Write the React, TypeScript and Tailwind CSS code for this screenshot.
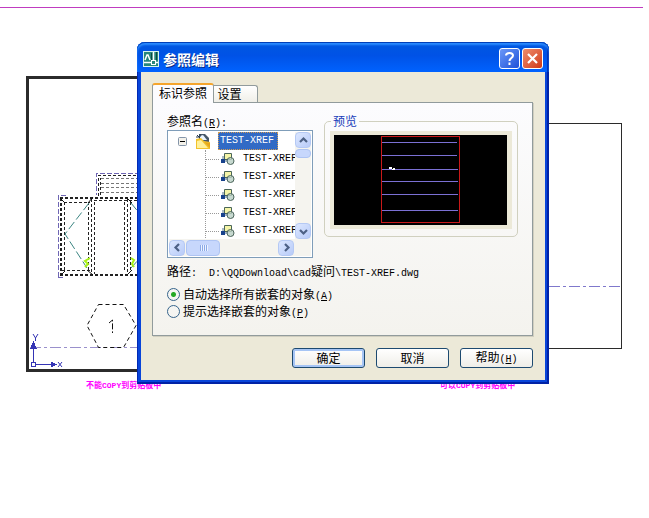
import { useState } from "react";
import type { ReactNode } from "react";

const CAPTION = '"Liberation Mono", "Noto Sans CJK SC", monospace';

function Latin({ children }: { children: ReactNode }) {
  return <span className="font-['Liberation_Mono','Noto_Sans_CJK_SC',monospace] text-[10px]">{children}</span>;
}

function Drawing() {
  return (
    <svg className="absolute left-0 top-0" width="649" height="518" viewBox="0 0 649 518" fill="none" shapeRendering="crispEdges" aria-hidden="true">
      <rect y="7" width="643" height="1" fill="#c03cc0" />
      <path d="M140 77.500H27.500V370.500H140" stroke="#2b2b2b" strokeWidth="3" />
      <path d="M540 123.500H621.500V348.500H540" stroke="#2b2b2b" />
      <path d="M30 347.500H140" stroke="#9a90cc" strokeDasharray="11 3 3 3" />
      <path d="M549 286.500H621" stroke="#7f78cc" strokeDasharray="11 3 3 3" />
      <g stroke="#6f66b4" strokeDasharray="5 2">
        <path d="M140 173.500H96.500V195M58.500 277V195.500H68M58 277.500H65" />
      </g>
      <g stroke="#222" strokeDasharray="3 2">
        <path d="M98.500 196V175.500H140M100.500 195V178" />
        <path d="M101 178.500H140M101 183.500H140M101 187.500H140M101 192.500H140" stroke="#777" />
        <path d="M60 197.500H140M60 275H140" strokeWidth="2" />
        <path d="M64 202.500H90M94 200.500H140M62 270.500H90" />
        <path d="M61 198V276" strokeWidth="2" />
        <path d="M64.500 202V271M88.500 202V271M91.500 199V274M94.500 202V274M124.500 202V272M127.500 199V274M130.500 202V271" />
      </g>
      <g stroke="#111" shapeRendering="auto">
        <path d="M60 198L65 203M93 197L88 203M60 276L65 271M87 270L93 275M126 197L132 203M127 275L132 270" />
        <path d="M98.500 304.500H123.500L136 325.500L123.500 347.500H98.500L87 325.500Z" strokeDasharray="4 3" />
        <path d="M109 323L112.500 320V333" strokeDasharray="6 2" />
      </g>
      <g stroke="#3b8582" strokeDasharray="9 3" shapeRendering="auto">
        <path d="M89 203L65 234L87 268M131 203L140 214M131 268L140 258" />
      </g>
      <g stroke="#a9f216" strokeWidth="2" shapeRendering="auto">
        <path d="M90 258L85 261L88 264L85 267M131 258L134 260L132 264L134 267" />
      </g>
      <g stroke="#3434b5">
        <path d="M33.500 362V348M36 364.500H53" />
        <path d="M31.500 362.500H35.500V366.500H31.500Z" />
        <path d="M33.500 342L31 348H36ZM56 364.500L51 362V367Z" fill="#3434b5" />
        <path d="M33 334L35.500 338L38 334M35.500 338V341M58 362L62 367M62 362L58 367" shapeRendering="auto" />
      </g>
      <g fill="#ff00ff" fontSize="8" fontWeight="700" fontFamily={CAPTION}>
        <text x="86" y="388">不能COPY到剪贴板中</text>
        <text x="440" y="388">可以COPY到剪贴板中</text>
      </g>
    </svg>
  );
}

function AppIcon() {
  return (
    <svg width="16" height="16" viewBox="0 0 16 16" fill="none" aria-hidden="true">
      <rect x=".5" y=".5" width="15" height="15" fill="#27877b" stroke="#d7f4ec" />
      <path d="M2 9L4 4H5L7 9M10.500 1V9M1 11.500H8M12.500 11.500H15" stroke="#fff" strokeWidth="1.500" />
      <path d="M8.500 2V9M13.500 1V9" stroke="#0c473f" />
      <rect x="8.500" y="9.500" width="4" height="4" fill="#27877b" stroke="#fff" />
    </svg>
  );
}

function FileIcon() {
  return (
    <svg width="17" height="17" viewBox="0 0 17 17" aria-hidden="true">
      <path d="M4 1H10L14 5V12H4Z" fill="#46586a" />
      <path d="M5 3L8 2L12 7H5Z" fill="#e9f4ff" />
      <path d="M1 6L6 5L9 8L15 9V16H1Z" fill="#f2c22c" />
      <path d="M2 8L6 7L13 15H2Z" fill="#fff09a" />
      <path d="M9 9L15 10V15Z" fill="#e5a81b" />
      <path d="M2 2L5 5M5 1V4M1 4H4" stroke="#26394c" />
    </svg>
  );
}

function BlockIcon() {
  return (
    <svg className="shrink-0" width="15" height="14" viewBox="0 0 15 14" fill="none" aria-hidden="true">
      <path d="M3.500 1.500H10.500V7.500H3.500Z" fill="#f5f5a8" stroke="#4b6658" />
      <circle cx="9.500" cy="9" r="3.500" fill="#b9cfc4" fillOpacity=".8" stroke="#4c655b" />
      <path d="M2 4V9H7" stroke="#54748b" />
      <rect x="0" y="7" width="4" height="4" fill="#17418b" />
    </svg>
  );
}

function Arrow({ dir }: { dir: "up" | "down" | "left" | "right" }) {
  const d = {
    up: "M1 6L4.500 2.500L8 6",
    down: "M1 3L4.500 6.500L8 3",
    left: "M6 1L2.500 4.500L6 8",
    right: "M3 1L6.500 4.500L3 8",
  }[dir];
  return (
    <button type="button" aria-label={`Scroll ${dir}`} className="flex size-4 shrink-0 items-center justify-center rounded-sm border border-[#b5c9f4] bg-linear-to-br from-[#dce7ff] to-[#b8cbf8]">
      <svg width="9" height="9" viewBox="0 0 9 9" fill="none"><path d={d} stroke="#4d6185" strokeWidth="2.200" /></svg>
    </button>
  );
}

function Tree() {
  return (
    <div className="flex h-32 flex-col border border-[#7f9db9] bg-white p-px">
      <div className="flex min-h-0 flex-1">
        <ul role="tree" className="min-w-0 flex-1 overflow-hidden whitespace-nowrap">
          <li role="treeitem" aria-expanded="true">
            <div className="flex h-[18px] items-center pl-[9px]">
              <svg width="9" height="9" viewBox="0 0 9 9" className="shrink-0" aria-hidden="true">
                <rect x=".5" y=".5" width="8" height="8" rx="1" fill="#f4f2eb" stroke="#8495a9" />
                <path d="M2 4.500H7" stroke="#000" />
              </svg>
              <span className="ml-2 shrink-0"><FileIcon /></span>
              <span className="ml-[6px] flex h-[18px] items-center border border-dotted border-[#d39b51] bg-[#316ac5] px-px pr-[3px] leading-4 text-white"><Latin>TEST-XREF</Latin></span>
            </div>
            <ul role="group" className="ml-9 border-l border-dotted border-[#999]">
              {[1, 2, 3, 4, 5].map((n) => (
                <li key={n} role="treeitem" className="flex h-[18px] items-center">
                  <span className="mr-[2px] w-[13px] shrink-0 border-t border-dotted border-[#999]" />
                  <BlockIcon />
                  <span className="ml-[7px] flex"><Latin>TEST-XREF</Latin></span>
                </li>
              ))}
            </ul>
          </li>
        </ul>
        <div className="flex w-4 flex-col bg-[#f5f4ef]">
          <Arrow dir="up" />
          <div className="mt-px h-[9px] rounded-sm border border-[#aec4f3] bg-[#c7d7fc]" />
          <div className="flex-1" />
          <Arrow dir="down" />
        </div>
      </div>
      <div className="flex h-[17px] items-center bg-[#f5f4ef] pr-[17px]">
        <Arrow dir="left" />
        <div className="ml-px flex h-4 w-[34px] items-center justify-center gap-px rounded-sm border border-[#aec4f3] bg-[#c7d7fc]">
          {[1, 2, 3, 4].map((n) => <span key={n} className="h-[6px] w-px bg-[#8caae6] shadow-[1px_0_#edf3ff]" />)}
        </div>
        <div className="flex-1" />
        <Arrow dir="right" />
      </div>
    </div>
  );
}

function Preview() {
  return (
    <fieldset className="h-[124px] min-w-0 flex-1 rounded-[5px] border border-[#d0d0bf] px-[5px]">
      <legend className="ml-px px-[2px] leading-4 text-[#173cba]">预览</legend>
      <div className="mt-[2px] border-4 border-r-[5px] border-[#ece9d8] bg-black">
        <svg className="block h-[90px] w-full" viewBox="0 0 173 90" fill="none" shapeRendering="crispEdges" role="img" aria-label="预览">
          <g fill="#7b70d4">
            <rect x="47" y="7" width="76" height="1" />
            <rect x="47" y="20" width="76" height="1" />
            <rect x="47" y="34" width="77" height="1" />
            <rect x="47" y="46" width="77" height="1" />
            <rect x="47" y="59" width="77" height="1" />
            <rect x="47" y="75" width="77" height="1" />
          </g>
          <rect x="47.500" y="1.500" width="78" height="86" stroke="#c91919" />
          <path d="M55 32H58V34H55ZM59 33H61V35H59ZM58 34H59V35H58Z" fill="#fff" />
        </svg>
      </div>
    </fieldset>
  );
}

function Option({ label, hotkey, checked, onSelect }: { label: string; hotkey: string; checked: boolean; onSelect: () => void }) {
  return (
    <label className="flex h-[17px] items-center gap-[3px]">
      <input
        type="radio"
        name="nesting"
        checked={checked}
        onChange={onSelect}
        className="size-[13px] shrink-0 appearance-none rounded-full border border-[#36648b] bg-[#f5f5f2] checked:bg-[radial-gradient(circle,#24a824_0,#24a824_2px,#f5f5f2_3px)]"
      />
      <span>{label}<Latin>(<u>{hotkey}</u>)</Latin></span>
    </label>
  );
}

const BUTTON = "h-5 w-[73px] rounded-[3px] border border-[#1d4a70] bg-linear-to-b from-white to-[#efeee8] leading-4";

export default function App() {
  const [all, setAll] = useState(true);
  return (
    <main className="relative min-h-screen overflow-hidden bg-white font-['Noto_Sans_CJK_SC',sans-serif] text-xs text-black">
      <Drawing />
      <section role="dialog" aria-labelledby="title" className="absolute left-[137px] top-[42px] w-[412px] rounded-t-lg bg-[#0845d9] px-1 pb-1 shadow-[inset_1px_0_#0029b5,inset_-2px_-2px_#0022a5]">
        <header className="-mx-1 flex h-[30px] items-center rounded-t-lg bg-linear-to-b from-[#0058df] from-0% via-[#0052e6] via-45% to-[#0062ff] px-[6px] pt-[3px] shadow-[inset_0_1px_#0040b8,inset_0_3px_2px_#2b8cff,inset_-2px_0_#0030b5]">
          <AppIcon />
          <h1 id="title" className="ml-1 flex-1 text-sm leading-4 font-bold text-white [text-shadow:1px_1px_#0a2b86]">参照编辑</h1>
          <div className="flex gap-[2px]">
            <button type="button" aria-label="帮助" className="flex size-[21px] items-center justify-center rounded-[3px] border border-white bg-linear-to-br from-[#6b97f8] to-[#1e4fd8]">
              <svg width="13" height="15" viewBox="0 0 13 15" fill="none"><path d="M3 4.500C3 1 10 1 10 4.500C10 7 6.500 7 6.500 10M6.500 11.500V14" stroke="#fff" strokeWidth="2" /></svg>
            </button>
            <button type="button" aria-label="关闭" className="flex size-[21px] items-center justify-center rounded-[3px] border border-white bg-linear-to-br from-[#ee8c6c] to-[#cf3510]">
              <svg width="13" height="13" viewBox="0 0 13 13" fill="none"><path d="M2 2L11 11M11 2L2 11" stroke="#fff" strokeWidth="2.200" /></svg>
            </button>
          </div>
        </header>
        <div className="bg-[#ece9d8] pb-3 pl-[11px] pr-3 pt-[11px]">
          <div role="tablist" className="flex items-end">
            <button type="button" role="tab" aria-selected="true" className="relative -mb-px h-5 w-[62px] rounded-t-[3px] border-x border-t-2 border-x-[#919b9c] border-t-[#f5a52c] bg-[#fcfcfe] pb-[3px] leading-[14px]">标识参照</button>
            <button type="button" role="tab" aria-selected="false" className="h-[17px] w-11 rounded-tr-[3px] border-r border-t border-[#919b9c] bg-linear-to-b from-white to-[#f0efe8] pr-3 leading-[14px]">设置</button>
          </div>
          <div role="tabpanel" className="h-[234px] border border-[#919b9c] bg-linear-to-b from-[#fcfcfe] to-[#f4f3ee] px-[14px] pt-[10px] shadow-[1px_1px_#d0cebf]">
            <div className="flex items-start gap-[11px]">
              <div className="w-[146px]">
                <p className="mb-px h-4 leading-4">参照名<Latin>(<u>R</u>):</Latin></p>
                <Tree />
              </div>
              <Preview />
            </div>
            <p className="mt-[5px] h-4 leading-4">路径<Latin>: &nbsp;D:\QQDownload\cad</Latin>疑问<Latin>\TEST-XREF.dwg</Latin></p>
            <div className="mt-[7px]">
              <Option label="自动选择所有嵌套的对象" hotkey="A" checked={all} onSelect={() => setAll(true)} />
              <Option label="提示选择嵌套的对象" hotkey="P" checked={!all} onSelect={() => setAll(false)} />
            </div>
          </div>
          <footer className="mt-3 flex justify-end gap-[11px]">
            <button type="button" className={`${BUTTON} shadow-[inset_0_0_0_2px_#a6c5f5]`}>确定</button>
            <button type="button" className={BUTTON}>取消</button>
            <button type="button" className={BUTTON}>帮助<Latin>(<u>H</u>)</Latin></button>
          </footer>
        </div>
      </section>
    </main>
  );
}
